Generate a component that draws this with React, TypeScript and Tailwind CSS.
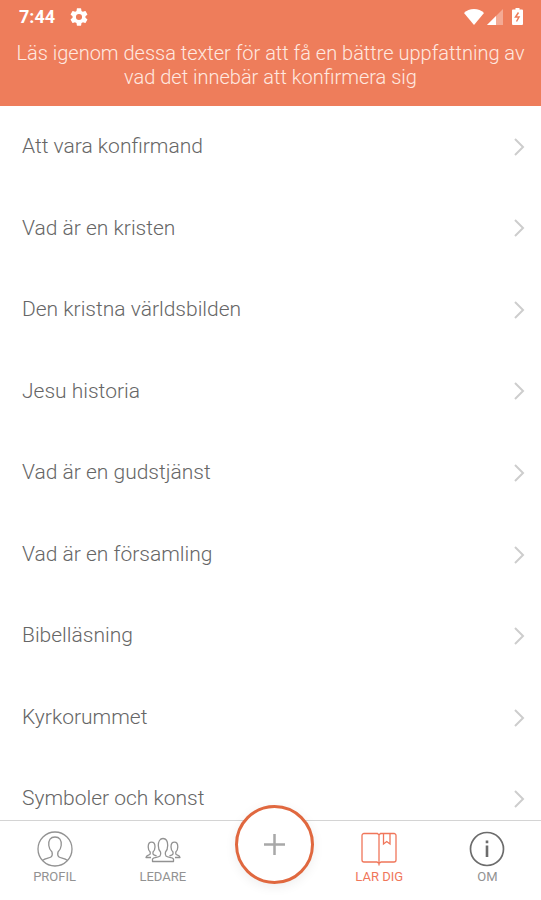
import React, { useState } from 'react';

const texts = [
  'Att vara konfirmand',
  'Vad är en kristen',
  'Den kristna världsbilden',
  'Jesu historia',
  'Vad är en gudstjänst',
  'Vad är en församling',
  'Bibelläsning',
  'Kyrkorummet',
  'Symboler och konst',
];

function StatusBar() {
  return (
    <div className="flex h-[33px] items-center justify-between pl-[19px] pr-[18px] text-white">
      <div className="flex items-center gap-[15px]">
        <span className="text-lg leading-6 font-bold">7:44</span>
        <svg viewBox="2 2 20 20" className="h-[18px] w-[18px]" fill="currentColor" aria-hidden="true">
          <path d="M19.14 12.94c.04-.3.06-.61.06-.94 0-.32-.02-.64-.07-.94l2.03-1.58a.49.49 0 0 0 .12-.61l-1.92-3.32a.49.49 0 0 0-.59-.22l-2.39.96c-.5-.38-1.03-.7-1.62-.94l-.36-2.54a.48.48 0 0 0-.48-.41h-3.84c-.24 0-.43.17-.47.41l-.36 2.54c-.59.24-1.13.57-1.62.94l-2.39-.96a.48.48 0 0 0-.59.22L2.740 8.870c-.12.21-.08.47.12.61l2.03 1.58c-.05.3-.09.63-.09.94s.02.64.07.94l-2.03 1.58a.49.49 0 0 0-.12.61l1.92 3.32c.12.22.37.29.59.22l2.39-.96c.5.38 1.03.7 1.62.94l.36 2.54c.05.24.24.41.48.41h3.84c.24 0 .44-.17.47-.41l.36-2.54c.59-.24 1.13-.56 1.62-.94l2.39.96c.22.08.47 0 .59-.22l1.92-3.32a.48.48 0 0 0-.12-.61l-2.01-1.58zM12 15.400a3.400 3.400 0 1 1 0-6.800 3.400 3.400 0 0 1 0 6.800z" />
        </svg>
      </div>
      <div className="flex items-center">
        <svg viewBox="0 0 20 16" className="h-4 w-5" fill="currentColor" aria-hidden="true">
          <path d="M0 4C2.600 1.500 6 0 10 0s7.400 1.500 10 4L10 16z" />
        </svg>
        <svg viewBox="0 0 16 16" className="ml-[3px] h-4 w-4" fill="currentColor" aria-hidden="true">
          <path d="M0 16L16 0v16z" opacity="0.35" />
          <path d="M0 16L9 7v9z" />
        </svg>
        <svg viewBox="0 0 11 17" className="ml-[9px] h-[17px] w-[11px]" fill="currentColor" aria-hidden="true">
          <path d="M3.500 0h4v1.500H10a1 1 0 0 1 1 1V16a1 1 0 0 1-1 1H1a1 1 0 0 1-1-1V2.500a1 1 0 0 1 1-1h2.500z" />
          <path d="M6.500 4.500L3.500 9h3.500L4.500 13.500" fill="none" stroke="#ee7d5b" strokeWidth="1.500" />
        </svg>
      </div>
    </div>
  );
}

function ProfileIcon() {
  return (
    <svg viewBox="0 0 36 36" className="h-9 w-9" fill="none" stroke="currentColor" strokeWidth="1.300" aria-hidden="true">
      <circle cx="18" cy="18" r="17" />
      <path d="M5.500 29.500c3-2.300 6.500-2.200 8.500-3.500 1.500-1 1.500-3 1-5-1.800-1.800-3-3.800-3.200-6.500C11.300 9 13.500 6 18 6s6.700 3 6.200 8.500c-.2 2.700-1.400 4.700-3.200 6.500-.5 2-.5 4 1 5 2 1.300 5.500 1.200 8.500 3.500" />
    </svg>
  );
}

function LeadersIcon() {
  return (
    <svg viewBox="0 0 36 36" className="h-9 w-9" fill="none" stroke="currentColor" strokeWidth="1.300" strokeLinejoin="round" aria-hidden="true">
      <path d="M7.500 30.500v-2.500c1-2 5.500-1.300 7.500-3 .9-.9.9-2.500.5-4-1.500-1.500-2.200-3.500-2.200-6.500 0-4 1.700-7 4.700-7s4.700 3 4.700 7c0 3-.7 5-2.200 6.500-.4 1.500-.4 3.100.5 4 2 1.700 6.500 1 7.500 3v2.500z" />
      <path d="M6 26.500H1c.2-2.500 3.500-2 4.200-3.500v-2c-1.400-1.300-2-3-2-5 0-2.700 1.200-4.800 3.400-4.800S10 13.300 10 16c0 2-.6 3.700-2 5v2c.6 1.200 2.200 1.200 3.500 2" />
      <path d="M30 26.500h5c-.2-2.500-3.500-2-4.200-3.500v-2c1.400-1.300 2-3 2-5 0-2.700-1.200-4.800-3.400-4.800S26 13.300 26 16c0 2 .6 3.700 2 5v2c-.6 1.200-2.200 1.200-3.500 2" />
    </svg>
  );
}

function BookIcon() {
  return (
    <svg viewBox="0 0 36 36" className="h-9 w-9" fill="none" stroke="currentColor" strokeWidth="1.300" aria-hidden="true">
      <path d="M18 34.500V4l-1.500-1.500H3A2 2 0 0 0 1 4.500V29a2 2 0 0 0 2 2h13l2 1.500 2-1.500h13a2 2 0 0 0 2-2V4.500a2 2 0 0 0-2-2H19.500L18 4" />
      <path d="M22.500 2.500V13l3.250-2.500L29 13V2.500" />
    </svg>
  );
}

function InfoIcon() {
  return (
    <svg viewBox="0 0 36 36" className="h-9 w-9 text-[#6c6c6c]" fill="none" stroke="currentColor" strokeWidth="1.700" aria-hidden="true">
      <circle cx="18" cy="18" r="16.500" />
      <path d="M18 14.500v11.500M18 9.500v2.700" strokeWidth="2.600" />
    </svg>
  );
}

const tabs = [
  { label: 'PROFIL', icon: ProfileIcon },
  { label: 'LEDARE', icon: LeadersIcon },
  null,
  { label: 'LAR DIG', icon: BookIcon },
  { label: 'OM', icon: InfoIcon },
];

export default function App() {
  const [active, setActive] = useState('LAR DIG');

  return (
    <div className="flex min-h-screen flex-col bg-white font-[Roboto,sans-serif]">
      <header className="bg-[#ee7d5b] pb-[17px]">
        <StatusBar />
        <p className="mt-2 px-4 text-center text-xl leading-6 font-light text-[#ffe9e0]">
          Läs igenom dessa texter för att få en bättre uppfattning av vad det innebär att konfirmera sig
        </p>
      </header>

      <ul className="grid flex-1 auto-rows-fr">
        {texts.map((text) => (
          <li key={text} className="flex">
            <a href="#" className="flex flex-1 items-center justify-between pl-[22px] pr-4 text-[21px] font-light text-[#666]">
              {text}
              <svg viewBox="0 0 12 18" className="h-[18px] w-3" fill="none" stroke="#cdcdcd" strokeWidth="2" aria-hidden="true">
                <path d="M2 1l8 8-8 8" />
              </svg>
            </a>
          </li>
        ))}
      </ul>

      {/* Bottom tab bar, covers the end of the list */}
      <nav className="sticky bottom-0 -mt-5 grid h-20 grid-cols-5 border-t border-[#d4d4d4] bg-white">
        {tabs.map((tab) =>
          tab ? (
            <button
              key={tab.label}
              type="button"
              onClick={() => setActive(tab.label)}
              className={`flex flex-col items-center pt-[10px] pl-px text-[13px] leading-4 ${
                active === tab.label ? 'text-[#f0765a]' : 'text-[#929292]'
              }`}
            >
              <tab.icon />
              <span className="mt-[2px]">{tab.label}</span>
            </button>
          ) : (
            <div key="add" className="flex justify-center pl-2">
              <button
                type="button"
                aria-label="Lägg till"
                className="-mt-4 flex h-[79px] w-[79px] shrink-0 items-center justify-center rounded-full border-[3px] border-[#e0683f] bg-white shadow-[0_3px_12px_rgba(0,0,0,0.07)]"
              >
                <svg viewBox="0 0 21 21" className="h-[21px] w-[21px]" stroke="#a8a8a8" strokeWidth="2.500" aria-hidden="true">
                  <path d="M10.500 0v21M0 10.500h21" />
                </svg>
              </button>
            </div>
          )
        )}
      </nav>
    </div>
  );
}
